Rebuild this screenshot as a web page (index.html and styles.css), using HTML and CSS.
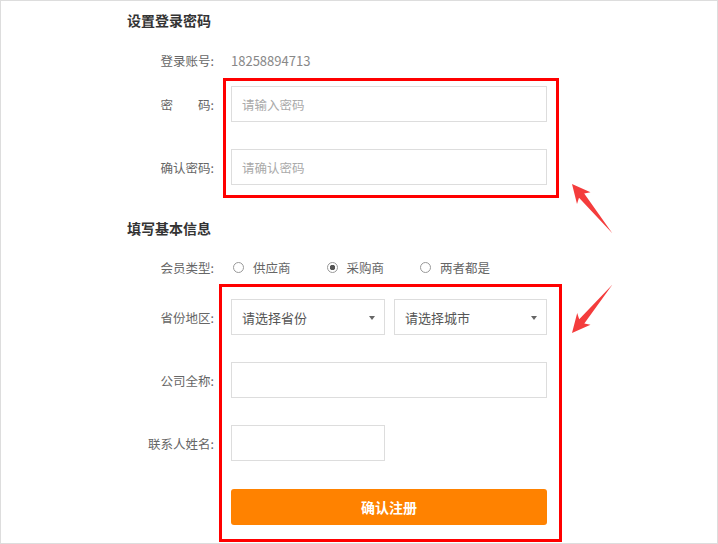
FILE: index.html
```html
<!DOCTYPE html>
<html lang="zh-CN">
<head>
    <meta charset="UTF-8">
    <title>注册</title>
    <link rel="stylesheet" href="styles.css">
</head>
<body>
<div class="page">
    <form class="form">
        <!--登录密码-->
        <h2 class="section-title">设置登录密码</h2>
        <div class="row row-account">
            <label class="label">登录账号:</label>
            <span class="value">18258894713</span>
        </div>
        <div class="row row-first">
            <label class="label">密&emsp;&emsp;码:</label>
            <input class="field" type="password" placeholder="请输入密码">
        </div>
        <div class="row">
            <label class="label">确认密码:</label>
            <input class="field" type="password" placeholder="请确认密码">
        </div>

        <!--基本信息-->
        <h2 class="section-title section-info">填写基本信息</h2>
        <div class="row row-type">
            <label class="label">会员类型:</label>
            <label class="radio"><input type="radio" name="type">供应商</label>
            <label class="radio"><input type="radio" name="type" checked>采购商</label>
            <label class="radio"><input type="radio" name="type">两者都是</label>
        </div>
        <div class="row row-area">
            <label class="label">省份地区:</label>
            <div class="select-wrap">
                <select><option>请选择省份</option></select>
            </div>
            <div class="select-wrap">
                <select><option>请选择城市</option></select>
            </div>
        </div>
        <div class="row">
            <label class="label">公司全称:</label>
            <input class="field" type="text">
        </div>
        <div class="row">
            <label class="label">联系人姓名:</label>
            <input class="field field-short" type="text">
        </div>
        <div class="row row-submit">
            <span class="label"></span>
            <button class="btn" type="button">确认注册</button>
        </div>
    </form>

    <!--标注框和箭头-->
    <div class="mark mark-password"></div>
    <div class="mark mark-info"></div>
    <svg class="arrows" viewBox="565 178 55 160" width="55" height="160">
        <polygon points="572,184 590.5,192.2 584.2,193.6 612.5,233.5 579,197.8 577,204"/>
        <polygon points="572,333 590.5,324.8 584.3,323.5 612.5,284.5 579.2,319.3 577.2,313"/>
    </svg>
</div>
</body>
</html>
```

FILE: styles.css
```css
* {
    box-sizing: border-box;
}

body {
    margin: 0;
    font-family: "Noto Sans CJK SC", "Microsoft YaHei", sans-serif;
    background: #fff;
}

/*整个画面，外面一圈浅灰边*/
.page {
    position: relative;
    width: 718px;
    height: 544px;
    overflow: hidden;
    background: #fff;
    box-shadow: inset 0 0 0 1px #ddd;
}

.form {
    padding: 10px 0 0 127px;
}

.section-title {
    margin: 0;
    font-size: 14px;
    font-weight: bold;
    line-height: 20px;
    color: #333;
}

.section-info {
    margin-top: 33px;
}

/*表单行*/
.row {
    display: flex;
    align-items: center;
    height: 36px;
    margin-top: 27px;
}

.row-account {
    height: 20px;
    margin-top: 20px;
}

.row-first {
    margin-top: 16px;
}

.row-type {
    height: 20px;
    margin-top: 19px;
}

.row-area {
    margin-top: 22px;
}

.row-submit {
    margin-top: 28px;
}

.label {
    flex-shrink: 0;
    width: 87px;
    margin-right: 17px;
    text-align: right;
    font-size: 12.5px;
    color: #666;
}

.value {
    font-size: 13px;
    color: #888;
}

/*输入框*/
.field {
    width: 316px;
    height: 36px;
    padding: 0 10px;
    border: 1px solid #ddd;
    font-family: inherit;
    font-size: 12.5px;
    color: #333;
    outline: none;
}

.field::placeholder {
    color: #aaa;
}

.field-short {
    width: 154px;
}

/*单选*/
.radio {
    display: flex;
    align-items: center;
    margin-right: 34px;
    font-size: 12.5px;
    color: #666;
}

.radio input {
    appearance: none;
    width: 11px;
    height: 11px;
    margin: 0 9px 0 2px;
    border: 1px solid #999;
    border-radius: 50%;
    background: #fff;
}

.radio input:checked {
    background: radial-gradient(circle, #555 0 2.5px, #fff 3px);
}

/*下拉框*/
.select-wrap {
    position: relative;
    width: 154px;
    height: 36px;
}

.select-wrap + .select-wrap {
    width: 153px;
    margin-left: 9px;
}

.select-wrap select {
    appearance: none;
    width: 100%;
    height: 100%;
    padding: 0 10px;
    border: 1px solid #ddd;
    border-radius: 0;
    background: #fff;
    font-family: inherit;
    font-size: 13px;
    color: #555;
    outline: none;
}

.select-wrap::after {
    content: '';
    position: absolute;
    right: 10px;
    top: 17px;
    border-left: 3px solid transparent;
    border-right: 3px solid transparent;
    border-top: 4px solid #666;
}

/*提交按钮*/
.btn {
    width: 316px;
    height: 36px;
    border: none;
    border-radius: 3px;
    background: #ff8200;
    font-family: inherit;
    font-size: 14px;
    font-weight: bold;
    color: #fff;
}

/*红色标注*/
.mark {
    position: absolute;
    border: 3px solid #f00;
}

.mark-password {
    left: 223px;
    top: 78px;
    width: 336px;
    height: 120px;
}

.mark-info {
    left: 219px;
    top: 284px;
    width: 343px;
    height: 258px;
}

.arrows {
    position: absolute;
    left: 565px;
    top: 178px;
    fill: #f43c3c;
}
```
